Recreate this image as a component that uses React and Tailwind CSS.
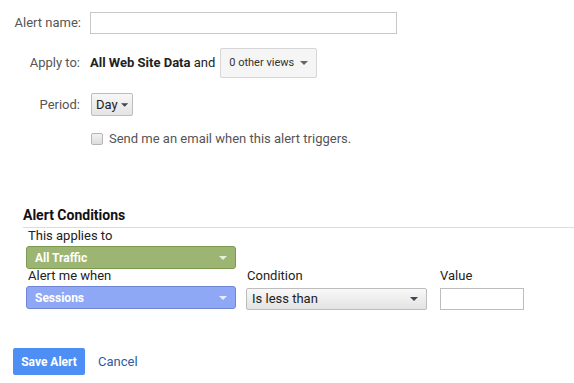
import React from "react"

const Caret = ({ className = "" }) => (
  <svg width="8" height="4" viewBox="0 0 8 4" className={className}>
    <path d="M0 0 L8 0 L4 4 Z" fill="currentColor" />
  </svg>
)

export default function App() {
  return (
    <div className="w-[574px] h-[383px] bg-white text-[13px] text-[#222] font-['Roboto',sans-serif] overflow-hidden">
      <div className="pt-[12px]">
        <div className="flex items-center h-[22px]">
          <div className="w-[81px] text-right text-[#555]">Alert name:</div>
          <input className="ml-[9px] w-[307px] h-[22px] border border-[#c8c8c8] outline-none" />
        </div>

        <div className="flex items-center h-[30px] mt-[14px]">
          <div className="w-[80px] text-right text-[#555]">Apply to:</div>
          <div className="ml-[10px] text-[#222]">
            <span className="font-bold">All Web Site Data</span> and
          </div>
          <button className="ml-[5px] h-[30px] w-[97px] flex items-center justify-between px-[8px] border border-[#d6d6d6] rounded-[2px] bg-[#f5f5f5] text-[11px] text-[#333]">
            <span>0 other views</span>
            <Caret className="text-[#666]" />
          </button>
        </div>

        <div className="flex items-center h-[23px] mt-[15px]">
          <div className="w-[80px] text-right text-[#555]">Period:</div>
          <button className="ml-[11px] h-[23px] w-[42px] flex items-center gap-[3px] px-[4px] border border-[#bdbdbd] rounded-[2px] bg-gradient-to-b from-[#f7f7f7] to-[#e4e4e4] text-[#222]">
            <span>Day</span>
            <Caret className="text-[#445]" />
          </button>
        </div>

        <div className="flex items-center h-[13px] mt-[16px] ml-[91px]">
          <span className="w-[12px] h-[12px] border border-[#b5b5b5] rounded-[2px] bg-gradient-to-b from-[#f2f2f2] to-[#dcdcdc]" />
          <span className="ml-[6px] text-[#555]">Send me an email when this alert triggers.</span>
        </div>
      </div>

      <div className="mt-[61px] ml-[23px]">
        <div className="h-[22px] border-b border-[#dcdcdc] font-bold text-[14px] text-[#111] leading-[18px]">
          Alert Conditions
        </div>
        <div className="ml-[5px] h-[16px] leading-[16px] text-[#222]">This applies to</div>
        <div className="ml-[3px] mt-[2px] w-[210px] h-[23px] flex items-center justify-between px-[8px] rounded-[3px] border border-[#7c9a50] bg-[#9cb572] text-white font-bold text-[12px]">
          <span>All Traffic</span>
          <Caret className="text-[#e8eedd]" />
        </div>
        <div className="flex">
          <div>
            <div className="ml-[5px] h-[14px] leading-[14px] text-[#222]">Alert me when</div>
            <div className="ml-[3px] mt-[3px] w-[210px] h-[23px] flex items-center justify-between px-[8px] rounded-[3px] border border-[#6f86d6] bg-[#8ea8f5] text-white font-bold text-[12px]">
              <span>Sessions</span>
              <Caret className="text-[#e6ecfd]" />
            </div>
          </div>
          <div className="ml-[10px]">
            <div className="ml-[1px] h-[14px] leading-[14px] text-[#222]">Condition</div>
            <div className="mt-[5px] w-[181px] h-[22px] flex items-center justify-between pl-[5px] pr-[8px] rounded-[2px] border border-[#bdbdbd] bg-gradient-to-b from-[#f8f8f8] to-[#e3e3e3] text-[#222]">
              <span>Is less than</span>
              <Caret className="text-[#445]" />
            </div>
          </div>
          <div className="ml-[13px]">
            <div className="h-[14px] leading-[14px] text-[#222]">Value</div>
            <div className="mt-[5px] w-[84px] h-[22px] border border-[#bdbdbd] bg-white" />
          </div>
        </div>
      </div>

      <div className="flex items-center mt-[38px] ml-[13px]">
        <button className="w-[72px] h-[27px] rounded-[2px] bg-[#4d8ff5] text-white font-bold text-[12px]">
          Save Alert
        </button>
        <span className="ml-[13px] text-[#2f5c9e]">Cancel</span>
      </div>
    </div>
  )
}
